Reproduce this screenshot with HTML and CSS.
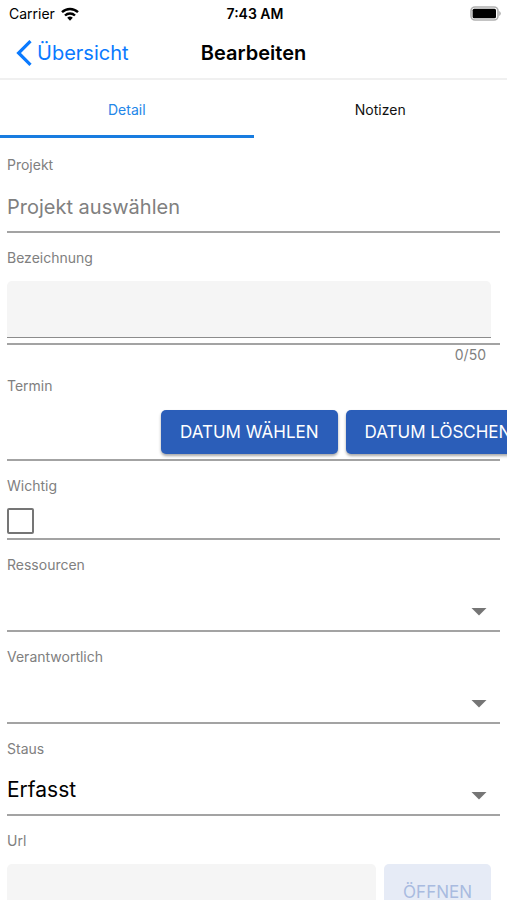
FILE: index.html
```html
<!DOCTYPE html>
<html lang="de">
<head>
  <meta charset="UTF-8">
  <meta name="viewport" content="width=device-width, initial-scale=1">
  <title>Bearbeiten</title>
  <link rel="stylesheet" href="styles.css">
</head>
<body>

  <div class="statusbar">
    <div class="carrier">
      <span>Carrier</span>
      <svg width="18" height="14" viewBox="0 0 18 14" fill="none" stroke="#000" stroke-width="2.4">
        <path d="M1 5.2a11.6 11.6 0 0 1 16 0"/>
        <path d="M4 8.5a7.2 7.2 0 0 1 10 0"/>
        <path d="M9 13.8l-2.8-3a4 4 0 0 1 5.6 0z" fill="#000" stroke="none"/>
      </svg>
    </div>
    <span class="time">7:43 AM</span>
    <svg class="battery" width="31" height="15" viewBox="0 0 31 15">
      <rect x="1" y="1" width="27" height="13" rx="4" fill="#fff" stroke="#b0b0b0" stroke-width="1.6"/>
      <rect x="2.6" y="2.8" width="23.4" height="9.4" rx="1.5" fill="#000"/>
      <path d="M29.2 5v5q1.6-.8 1.6-2.5T29.2 5z" fill="#b0b0b0"/>
    </svg>
  </div>

  <header class="navbar">
    <a class="back" href="#">
      <svg width="16" height="26" viewBox="0 0 16 26" fill="none" stroke="#0a7aff" stroke-width="3.2">
        <path d="M14.5 1.2L2.6 13l11.9 11.8"/>
      </svg>
      <span>Übersicht</span>
    </a>
    <h1>Bearbeiten</h1>
  </header>

  <nav class="tabs">
    <a class="tab active" href="#detail">Detail</a>
    <a class="tab" href="#notizen">Notizen</a>
  </nav>

  <form id="detail">
    <div class="field">
      <label for="projekt">Projekt</label>
      <input class="plain" type="text" id="projekt" placeholder="Projekt auswählen">
    </div>

    <div class="field">
      <label for="bezeichnung">Bezeichnung</label>
      <div class="row">
        <input class="filled" type="text" id="bezeichnung" maxlength="50">
      </div>
    </div>
    <div class="counter">0/50</div>

    <div class="field">
      <label for="termin">Termin</label>
      <div class="row dates">
        <input class="date" type="text" id="termin" readonly>
        <button class="btn" type="button">DATUM WÄHLEN</button>
        <button class="btn" type="button">DATUM LÖSCHEN</button>
      </div>
    </div>

    <div class="field">
      <label for="wichtig">Wichtig</label>
      <input class="check" type="checkbox" id="wichtig">
    </div>

    <div class="field">
      <label for="ressourcen">Ressourcen</label>
      <div class="select">
        <select id="ressourcen"><option></option></select>
      </div>
    </div>

    <div class="field">
      <label for="verantwortlich">Verantwortlich</label>
      <div class="select">
        <select id="verantwortlich"><option></option></select>
      </div>
    </div>

    <div class="field">
      <label for="status">Staus</label>
      <div class="select">
        <select id="status"><option>Erfasst</option></select>
      </div>
    </div>

    <div class="field">
      <label for="url">Url</label>
      <div class="row">
        <input class="filled" type="text" id="url">
        <button class="btn tall" type="button" disabled>ÖFFNEN</button>
      </div>
    </div>
  </form>

</body>
</html>
```
FILE: styles.css
```css
* {
  box-sizing: border-box;
}

html {
  scrollbar-width: none;
}

body {
  margin: 0;
  font-family: Inter, "Liberation Sans", sans-serif;
  font-size: 14px;
  color: #000;
  background-color: #fff;
  overflow-x: hidden;
}

input, select, button {
  font-family: inherit;
  margin: 0;
}

.statusbar {
  display: grid;
  grid-template-columns: 1fr auto 1fr;
  align-items: center;
  height: 27px;
  padding: 0 6px 0 9px;
}

.carrier {
  display: flex;
  align-items: center;
  gap: 6px;
}

.time {
  font-size: 14px;
  font-weight: 600;
}

.battery {
  justify-self: end;
}

.navbar {
  display: grid;
  grid-template-columns: 1fr auto 1fr;
  align-items: center;
  height: 53px;
  padding: 0 16px;
  border-bottom: 2px solid #f0f0f0;
}

.back {
  display: flex;
  align-items: center;
  gap: 5px;
  font-size: 20px;
  color: #0a7aff;
  text-decoration: none;
}

h1 {
  margin: 0;
  font-size: 20px;
  font-weight: 600;
}

.tabs {
  display: flex;
}

.tab {
  flex: 1;
  height: 58px;
  line-height: 60px;
  text-align: center;
  color: #111;
  text-decoration: none;
  border-bottom: 3px solid transparent;
}

.tab.active {
  color: #2386e8;
  border-bottom-color: #187ce0;
}

form {
  padding: 2px 7px 16px;
}

.field {
  padding-top: 15px;
  border-bottom: 2px solid #a3a3a3;
}

.field label {
  display: block;
  line-height: 20px;
  color: #808080;
}

.row {
  display: flex;
  gap: 8px;
  padding: 13px 9px 5px 0;
}

.row.dates {
  padding-top: 14px;
}

.plain {
  display: block;
  width: 100%;
  height: 56px;
  padding: 8px 0 0;
  font-size: 20px;
  border: none;
  outline: none;
}

.plain::placeholder {
  color: #808080;
}

.filled {
  flex: 1;
  min-width: 0;
  height: 57px;
  padding: 0 16px;
  font-size: 20px;
  background-color: #f5f5f5;
  border: none;
  border-bottom: 1px solid #8c8c8c;
  border-radius: 5px 5px 0 0;
}

.counter {
  height: 16px;
  line-height: 20px;
  padding-right: 14px;
  text-align: right;
  color: #808080;
}

.date {
  flex: none;
  width: 146px;
  border: none;
}

.btn {
  flex: none;
  height: 44px;
  padding: 0 19px;
  font-size: 17px;
  font-weight: 400;
  color: #fff;
  background-color: #2b5eb9;
  border: none;
  border-radius: 5px;
  box-shadow: 0 2px 3px rgba(0, 0, 0, 0.35);
}

.btn.tall {
  height: 55px;
}

.btn:disabled {
  color: #a9bbe0;
  background-color: #e6ebf6;
  box-shadow: none;
}

.check {
  appearance: none;
  display: block;
  width: 27px;
  height: 26px;
  margin: 12px 0 4px;
  border: 2px solid #757575;
  border-radius: 2px;
}

.select {
  display: grid;
  align-items: center;
}

.select select,
.select::after {
  grid-area: 1 / 1;
}

.select select {
  appearance: none;
  width: 100%;
  height: 55px;
  padding: 6px 0 0;
  font-size: 21px;
  color: #000;
  background: none;
  border: none;
}

.select::after {
  content: "";
  justify-self: end;
  width: 16px;
  height: 8px;
  margin: 18px 13px 0 0;
  background-color: #757575;
  clip-path: polygon(0 0, 100% 0, 50% 100%);
  pointer-events: none;
}
```
